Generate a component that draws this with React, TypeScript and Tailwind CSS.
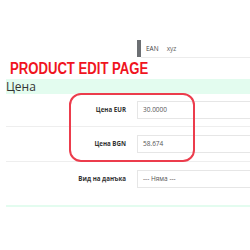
import React from "react";

export default function App() {
  const font = { fontFamily: '"Open Sans", "Liberation Sans", sans-serif' };
  return (
    <div className="w-[250px] h-[250px] bg-white overflow-hidden relative" style={font}>
      <div className="h-[40px]" />
      {/* EAN row */}
      <div className="flex h-[18px]">
        <div className="w-[137px] shrink-0" />
        <div className="w-[4px] h-[17px] bg-[#6c6f73] shrink-0" />
        <div className="flex-1 flex items-center border-b border-[#ececec] text-[6.5px] text-[#444]">
          <span className="ml-[5px]">EAN</span>
          <span className="ml-[8px] text-[#666]">xyz</span>
        </div>
      </div>
      {/* Title */}
      <div className="pl-[10px] h-[21px] flex items-center">
        <span
          className="inline-block origin-left scale-x-[0.82] whitespace-nowrap text-[16px] font-bold text-[#f0141e] leading-none"
          style={{ fontFamily: '"Liberation Sans", Arial, sans-serif' }}
        >
          PRODUCT EDIT PAGE
        </span>
      </div>
      {/* Section header */}
      <div className="ml-[6px] h-[15px] bg-[#e3fcef] flex items-center">
        <span className="text-[12px] text-[#333] leading-none">Цена</span>
      </div>
      {/* Rows */}
      <div className="ml-[6px] relative">
        <div className="flex items-center h-[33px] border-b border-[#eeeeee]">
          <div className="w-[120px] shrink-0 text-right text-[6.2px] font-bold text-[#333]">Цена EUR</div>
          <div className="ml-[11px] flex-1 h-[18px] border border-r-0 border-[#e6e6e6] flex items-center pl-[5px] text-[6.5px] text-[#555]">
            30.0000
          </div>
        </div>
        <div className="flex items-center h-[35px] border-b border-[#eeeeee]">
          <div className="w-[120px] shrink-0 text-right text-[6.2px] font-bold text-[#333]">Цена BGN</div>
          <div className="ml-[11px] flex-1 h-[18px] border border-r-0 border-[#e6e6e6] flex items-center pl-[5px] text-[6.5px] text-[#555]">
            58.674
          </div>
        </div>
        <div className="flex items-center h-[33px]">
          <div className="w-[120px] shrink-0 text-right text-[6.2px] font-bold text-[#333]">Вид на данъка</div>
          <div className="ml-[11px] flex-1 h-[18px] border border-r-0 border-[#e6e6e6] flex items-center pl-[5px] text-[6.5px] text-[#555]">
            --- Няма ---
          </div>
        </div>
        <div className="h-[10px]" />
        <div className="h-[2px] bg-[#e3fcef]" />
        <div className="absolute left-[63px] top-[-1px] w-[126px] h-[69px] border-2 border-[#ec3c4c] rounded-[12px] pointer-events-none" />
      </div>
    </div>
  );
}
